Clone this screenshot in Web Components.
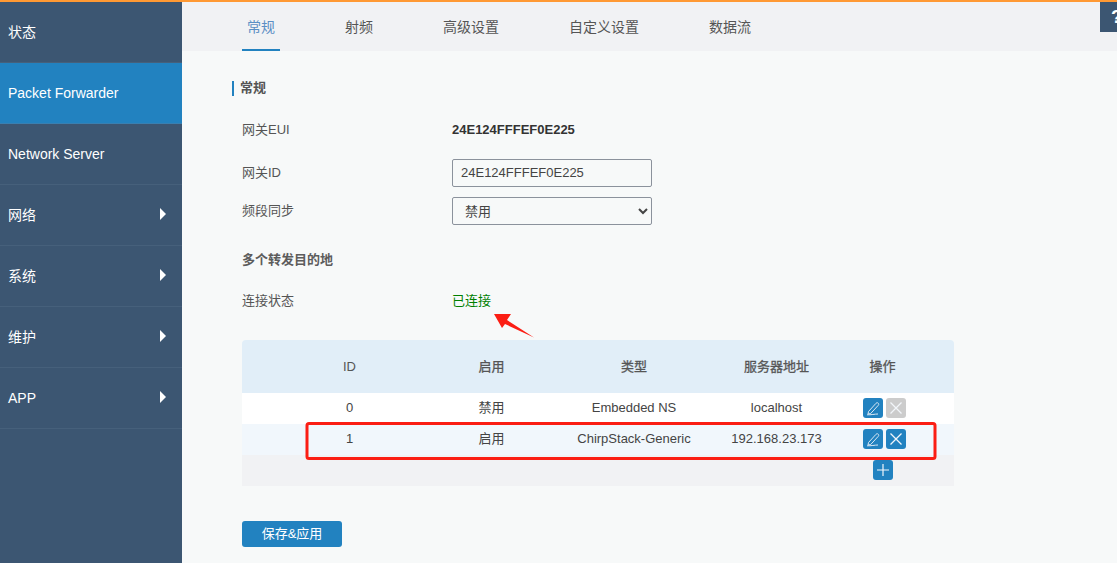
<!DOCTYPE html>
<html lang="zh"><head><meta charset="utf-8"><title>Packet Forwarder</title>
<style>
html,body{margin:0;height:100%;overflow:hidden}
body{font-family:"Liberation Sans","Noto Sans CJK SC",sans-serif;font-size:13px;color:#444;background:#f7f9f9}
</style></head><body>
<app-shell>
  <side-nav slot="nav">
    <nav-item cjk>状态</nav-item>
    <nav-item active>Packet Forwarder</nav-item>
    <nav-item>Network Server</nav-item>
    <nav-item cjk arrow>网络</nav-item>
    <nav-item cjk arrow>系统</nav-item>
    <nav-item cjk arrow>维护</nav-item>
    <nav-item arrow>APP</nav-item>
  </side-nav>
  <tab-bar slot="tabs">
    <tab-item active>常规</tab-item>
    <tab-item>射频</tab-item>
    <tab-item>高级设置</tab-item>
    <tab-item>自定义设置</tab-item>
    <tab-item>数据流</tab-item>
  </tab-bar>
  <general-form></general-form>
</app-shell>
<script>
const el=(name,html,init)=>{
  const t=document.createElement('template');t.innerHTML=html;
  customElements.define(name,class extends HTMLElement{
    constructor(){super();this.attachShadow({mode:'open'}).appendChild(t.content.cloneNode(true));}
    connectedCallback(){init&&init(this)}
  });
};
el('app-shell',`<style>
:host{display:block;height:563px;position:relative;box-sizing:border-box;border-top:2px solid #ff9933}
.wrap{display:flex;height:561px}
.nav{width:182px;flex:none;background:#3c5672}
.main{flex:1;min-width:0;display:flex;flex-direction:column}
.help{position:absolute;top:0;right:0;width:17px;height:30px;box-sizing:border-box;padding-left:11px;background:#3c5672;color:#fff;font:bold 19px/30px "Liberation Sans",sans-serif;overflow:hidden;white-space:nowrap}
</style><div class="wrap"><div class="nav"><slot name="nav"></slot></div><div class="main"><slot name="tabs"></slot><slot></slot></div></div><div class="help" aria-label="帮助">?</div>`);
el('side-nav',`<style>:host{display:block}</style><slot></slot>`);
el('nav-item',`<style>
:host{display:flex;align-items:center;justify-content:space-between;box-sizing:border-box;height:61px;padding:0 16px 0 8px;color:#fff;font-size:14px;background:#3c5672;border-bottom:1px solid #46607b}
:host([cjk]) span{padding-bottom:2px}
:host([active]){background:#2282c0;border-bottom-color:#3a7fb0}
svg{display:none;margin-bottom:2px}
:host([arrow]) svg{display:block}
</style><span><slot></slot></span><svg width="6" height="12" viewBox="0 0 6 12"><path d="M0 0L6 6L0 12Z" fill="#fff"/></svg>`);
el('tab-bar',`<style>:host{display:flex;height:49px;background:#f1f2f4;padding-left:60px;box-sizing:border-box}</style><slot></slot>`);
el('tab-item',`<style>
:host{display:block;box-sizing:border-box;height:49px;line-height:50px;font-size:14px;color:#555;padding:0 5px;margin-right:60px;position:relative}
:host([active]){color:#5b8fc4}
:host([active])::after{content:"";position:absolute;left:0;right:0;bottom:0;height:2px;background:#2282c0}
</style><slot></slot>`);
el('field-row',`<style>
:host{display:flex;align-items:center;box-sizing:border-box;padding-left:10px;font-size:13px;color:#555}
.l{width:210px;flex:none;padding-bottom:var(--lp,0)}
</style><div class="l"><slot name="label"></slot></div><div><slot></slot></div>`);
el('icon-btn',`<style>
:host{display:inline-block;width:20px;height:20px;border-radius:3px;background:#2282c0;line-height:0;vertical-align:top}
:host([off]){background:#cccccc}
svg{display:block}
</style><svg width="20" height="20" viewBox="0 0 20 20" fill="none" stroke="#dbe9f5" stroke-width="1" id="s"></svg>`,h=>{
  const k=h.getAttribute('kind');
  h.shadowRoot.getElementById('s').innerHTML={
    edit:'<path d="M5.5 13.5L13 5.3C13.7 4.6 14.7 4.6 15.3 5.2C15.9 5.8 15.9 6.7 15.2 7.4L7.7 15.5L5 16ZM4 16.8C8 17 12 16 15 16"/>',
    del:'<path d="M4.5 4.5L15.5 15.5M15.5 4.5L4.5 15.5" stroke="#f2f6fa" stroke-width="1.3"/>',
    add:'<path d="M10 4V16M4 10H16" stroke="#f2f6fa" stroke-width="1.2"/>'
  }[k];
});
el('data-table',`<style>
:host{display:block;width:712px;border-radius:4px 4px 0 0;overflow:hidden;font-size:13px;color:#444}
.r{display:grid;grid-template-columns:215px 69px 216px 69px 143px;height:31px;align-items:start;text-align:center;background:#fff;line-height:29px}
.r>div{white-space:nowrap;display:flex;justify-content:center;gap:3px}
.h{height:53px;background:#e1eef8;color:#555;line-height:53px}
.h>div+div{-webkit-text-stroke:.3px #555}
.a{background:#f1f7fc}
.f{background:#f1f2f4}
.ops{padding-top:5px;padding-left:3px}
.add{padding-top:5px}
</style>
<div class="r h"><div>ID</div><div>启用</div><div>类型</div><div>服务器地址</div><div>操作</div></div>
<div class="r"><div>0</div><div>禁用</div><div>Embedded NS</div><div>localhost</div><div class="ops"><icon-btn kind="edit"></icon-btn><icon-btn kind="del" off></icon-btn></div></div>
<div class="r a"><div>1</div><div>启用</div><div>ChirpStack-Generic</div><div>192.168.23.173</div><div class="ops"><icon-btn kind="edit"></icon-btn><icon-btn kind="del"></icon-btn></div></div>
<div class="r f"><div></div><div></div><div></div><div></div><div class="add"><icon-btn kind="add"></icon-btn></div></div>`);
el('red-marks',`<style>
:host{display:block;position:absolute;left:0;top:0;width:1117px;height:563px;pointer-events:none}
svg{position:absolute;left:0;top:0}
</style><svg width="1117" height="563" viewBox="0 0 1117 563">
<rect x="307" y="421.5" width="628" height="35" rx="2" fill="none" stroke="#fb1e14" stroke-width="3"/>
<path d="M494 312L511 312L507 318L534 335.5L505 322L502 326Z" fill="#fb1e14"/></svg>`);
el('general-form',`<style>
:host{display:block;padding:0 0 0 50px;font-size:13px;color:#555}
.sec{margin-top:30px;height:15px;border-left:2px solid #2282c0;padding-left:6px;font-weight:bold;font-size:13px;line-height:13px;color:#555}
.eui{margin-top:23px;height:20px;--lp:2px}
.eui b{color:#333;font-size:13px}
input,select{box-sizing:border-box;width:200px;height:28px;border:1px solid #8b929c;border-radius:2px;background:transparent;font:13px "Liberation Sans","Noto Sans CJK SC",sans-serif;color:#444;display:block;margin:0}
input{padding:0 8px 2px}
select{padding-left:8px}
.id{margin-top:20px;height:28px;--lp:4px}
.band{margin-top:10px;height:28px;--lp:4px}
.multi{margin-top:25px;padding-left:10px;font-weight:bold;line-height:20px;height:20px;color:#5c5c5c}
.st{margin-top:19px;height:20px}
.ok{color:#008000}
data-table{margin:31px 0 0 10px}
button{display:block;margin:35px 0 0 10px;width:100px;height:26px;border:0;border-radius:3px;background:#2282c0;color:#fff;font:13px "Liberation Sans","Noto Sans CJK SC",sans-serif;padding:0 0 3px}
</style>
<div class="sec">常规</div>
<field-row class="eui"><span slot="label">网关EUI</span><b>24E124FFFEF0E225</b></field-row>
<field-row class="id"><span slot="label">网关ID</span><input value="24E124FFFEF0E225" aria-label="网关ID"></field-row>
<field-row class="band"><span slot="label">频段同步</span><select aria-label="频段同步"><option>禁用</option></select></field-row>
<div class="multi">多个转发目的地</div>
<field-row class="st"><span slot="label">连接状态</span><span class="ok">已连接</span></field-row>
<data-table></data-table>
<button>保存&amp;应用</button>
<red-marks></red-marks>`);
</script>
</body></html>
